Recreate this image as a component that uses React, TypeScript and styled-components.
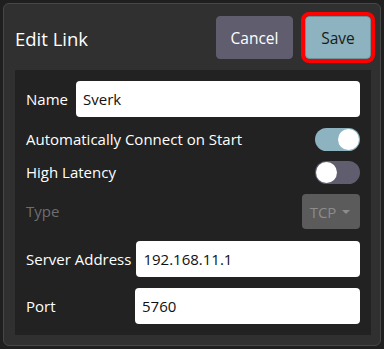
import React from 'react'
import styled, { createGlobalStyle } from 'styled-components'

/*---> Component <---*/
export default function App() {
  return (
    <>
      <GlobalStyle />
      <Dialog>
        <Header>
          <Title>Edit Link</Title>
          <ButtonRow>
            <Button width={77}>Cancel</Button>
            <Button width={66} primary focused>Save</Button>
          </ButtonRow>
        </Header>
        <Panel>
          <FieldRow>
            <Label width={45}>Name</Label>
            <TextInput value="Sverk" readOnly />
          </FieldRow>
          <ToggleRow>
            <Label>Automatically Connect on Start</Label>
            <Switch on>
              <Knob />
            </Switch>
          </ToggleRow>
          <ToggleRow>
            <Label>High Latency</Label>
            <Switch>
              <Knob />
            </Switch>
          </ToggleRow>
          <ComboRow>
            <Label disabled>Type</Label>
            <Combo>
              TCP
              <Caret />
            </Combo>
          </ComboRow>
          <FieldRow>
            <Label width={104}>Server Address</Label>
            <TextInput value="192.168.11.1" readOnly />
          </FieldRow>
          <FieldRow>
            <Label width={104}>Port</Label>
            <TextInput value="5760" readOnly />
          </FieldRow>
        </Panel>
      </Dialog>
    </>
  )
}

/*---> Styles <---*/

const GlobalStyle = createGlobalStyle`
  html, body {
    margin: 0;
    background: #1f1f1f;
    font-family: "Open Sans", "Liberation Sans", sans-serif;
  }
`

const Dialog = styled.div`
  margin: 3px;
  width: 378px;
  height: 343px;
  box-sizing: border-box;
  border: 1px solid #474747;
  border-radius: 6px;
  background: #303030;
  padding: 0 9px 0 11px;
  display: flex;
  flex-direction: column;
`

const Header = styled.div`
  height: 65px;
  display: flex;
  align-items: center;
  justify-content: space-between;
  padding-top: 1px;
`

const Title = styled.div`
  color: #ffffff;
  font-size: 18.5px;
  margin-top: 1px;
`

const ButtonRow = styled.div`
  display: flex;
  gap: 12px;
`

const Button = styled.div<{ primary?: boolean; focused?: boolean; width: number }>`
  width: ${p => p.width}px;
  height: 43px;
  box-sizing: border-box;
  display: flex;
  align-items: center;
  justify-content: center;
  border-radius: 4px;
  font-size: 15.5px;
  background: ${p => (p.primary ? '#8cb3bf' : '#5f5d6e')};
  color: ${p => (p.primary ? '#1a1a1a' : '#ffffff')};
  border: 1px solid ${p => (p.primary ? '#6f8f99' : '#5f5d6e')};
  outline: ${p => (p.focused ? '4px solid #ff0000' : 'none')};
`

const Panel = styled.div`
  background: #222222;
  height: 265px;
  box-sizing: border-box;
  padding: 11px;
  display: flex;
  flex-direction: column;
  gap: 11px;
`

const FieldRow = styled.div`
  display: flex;
  align-items: center;
  height: 36px;
  gap: 5px;
`

const ToggleRow = styled.div`
  display: flex;
  align-items: center;
  justify-content: space-between;
  height: 22px;
`

const ComboRow = styled.div`
  display: flex;
  align-items: flex-start;
  justify-content: space-between;
  height: 36px;
`

const Label = styled.div<{ disabled?: boolean; width?: number }>`
  color: ${p => (p.disabled ? '#6e6e6e' : '#ffffff')};
  font-size: 15px;
  line-height: 35px;
  white-space: nowrap;
  min-width: ${p => (p.width ? `${p.width}px` : 'auto')};
`

const TextInput = styled.input`
  flex: 1;
  min-width: 0;
  height: 36px;
  box-sizing: border-box;
  border: none;
  border-radius: 4px;
  background: #ffffff;
  color: #111111;
  font-family: "Open Sans", "Liberation Sans", sans-serif;
  font-size: 15px;
  padding: 0 7px;
  outline: none;
`

const Switch = styled.div<{ on?: boolean }>`
  width: 45px;
  height: 23px;
  border-radius: 12px;
  background: ${p => (p.on ? '#8cb3bf' : '#5f5d6e')};
  display: flex;
  align-items: center;
  justify-content: ${p => (p.on ? 'flex-end' : 'flex-start')};
  padding: 0 1px;
  box-sizing: border-box;
`

const Knob = styled.div`
  width: 21px;
  height: 21px;
  border-radius: 50%;
  background: #ffffff;
`

const Combo = styled.div`
  width: 58px;
  height: 35px;
  box-sizing: border-box;
  border-radius: 4px;
  background: #5b5b5b;
  color: #8c8c8c;
  font-size: 15px;
  display: flex;
  align-items: center;
  justify-content: center;
  gap: 6px;
  padding-right: 2px;
`

const Caret = styled.div`
  width: 0;
  height: 0;
  border-left: 4px solid transparent;
  border-right: 4px solid transparent;
  border-top: 4px solid #8c8c8c;
`
